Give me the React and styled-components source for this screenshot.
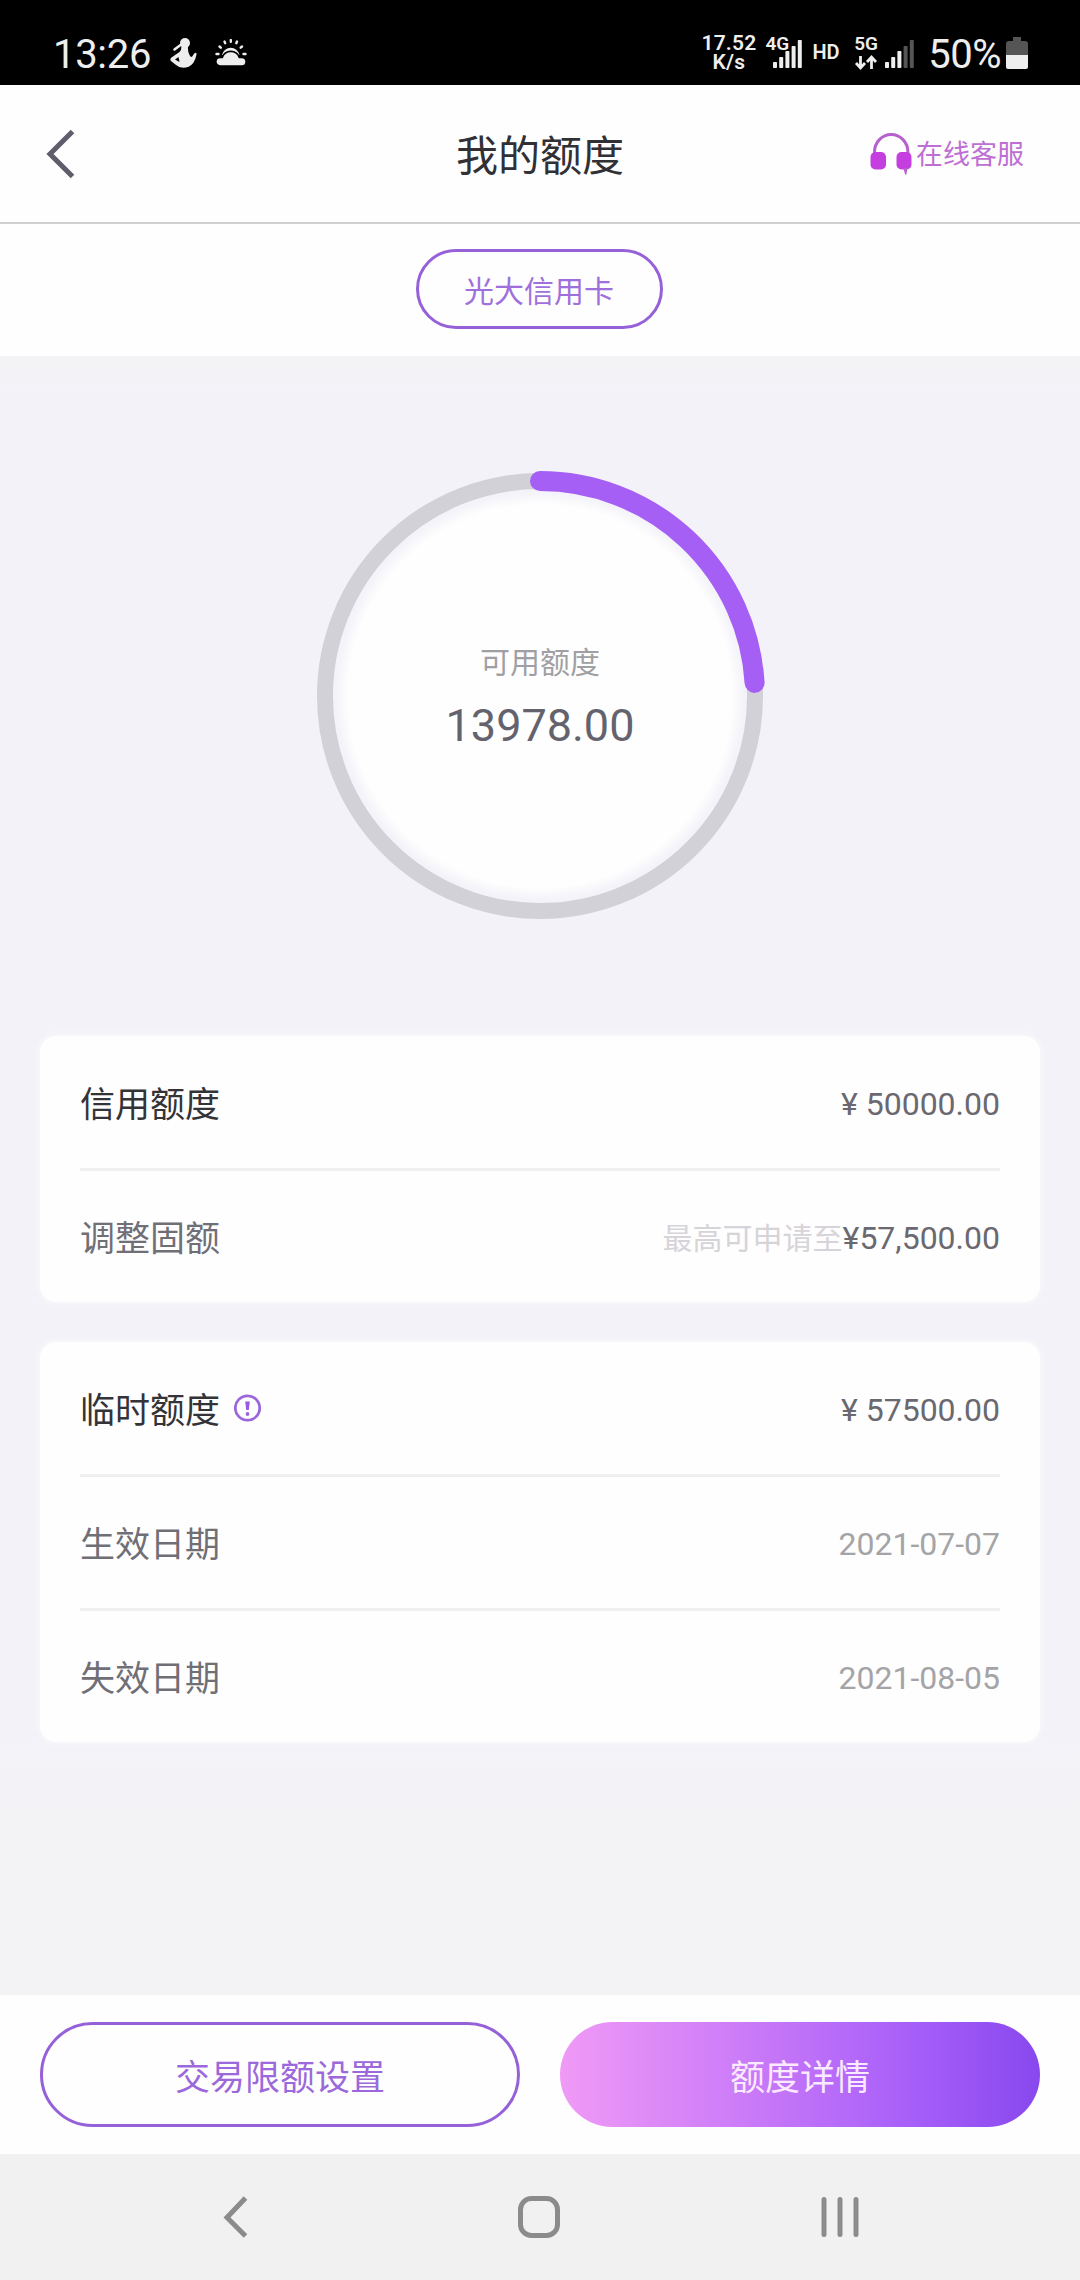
import React from "react";
import styled, { createGlobalStyle } from "styled-components";

const GlobalStyle = createGlobalStyle`
  * { box-sizing: border-box; }
  html, body { margin: 0; padding: 0; background: #fff; }
  body { font-family: Roboto, "Noto Sans CJK SC", sans-serif; }
  button { font-family: inherit; padding: 0; background: none; border: 0; }
  svg { display: block; flex: none; }
`;

const Screen = styled.div`
  width: 1080px;
  height: 2280px;
  display: flex;
  flex-direction: column;
  overflow: hidden;
  background: #fff;
`;

const StatusBar = styled.div`
  flex: none;
  height: 85px;
  padding: 22px 52px 0 53px;
  display: flex;
  justify-content: space-between;
  align-items: flex-start;
  background: #000;
  color: #eee;
`;

const StatusGroup = styled.div`
  display: flex;
  align-items: center;
  height: 62px;
`;

const StatusText = styled.span`
  margin-top: 3px;
  font-size: 40px;
  line-height: 62px;
  letter-spacing: ${(p) => p.$tracking || 0}px;
`;

const NetSpeed = styled.div`
  width: 57px;
  display: flex;
  flex-direction: column;
  align-items: center;
  font-size: 21px;
  line-height: 19px;
  font-weight: 600;
  letter-spacing: 0.2px;
`;

const Signal = styled.div`
  position: relative;
  width: ${(p) => p.$width}px;
  height: 36px;
  margin-left: ${(p) => p.$gap}px;
`;

const SignalLabel = styled.span`
  position: absolute;
  left: 0;
  top: -1px;
  font-size: 19px;
  line-height: 19px;
  font-weight: 600;
`;

const SignalArt = styled.svg`
  position: absolute;
  left: 0;
  top: 0;
`;

const HdMark = styled.span`
  margin: 0 0 3px 9px;
  font-size: 20px;
  font-weight: 600;
  line-height: 20px;
  letter-spacing: -0.2px;
`;

const Header = styled.header`
  flex: none;
  height: 139px;
  padding: 0 56px 0 44px;
  display: flex;
  align-items: center;
  justify-content: space-between;
  border-bottom: 2px solid #cfcfcf;
  background: #fefefe;
`;

const HeaderSide = styled.div`
  width: 240px;
  margin-right: ${(p) => (p.$end ? 0 : 12)}px;
  display: flex;
  justify-content: ${(p) => (p.$end ? "flex-end" : "flex-start")};
`;

const Title = styled.h1`
  margin: 6px 0 0;
  font-size: 42px;
  line-height: 50px;
  font-weight: 400;
  color: #303035;
`;

const Service = styled.button`
  display: flex;
  align-items: center;
  gap: 4px;
  padding-top: 2px;
  font-size: 27px;
  line-height: 44px;
  color: #bd6fd3;
`;

const TabStrip = styled.div`
  flex: none;
  height: 132px;
  padding: 25px 2px 0 0;
  display: flex;
  justify-content: center;
  align-items: flex-start;
  background: #fefefe;
`;

const CardTab = styled.button`
  width: 247px;
  height: 80px;
  padding-top: 5px;
  border: 3px solid #9560d8;
  border-radius: 40px;
  font-size: 30px;
  line-height: 40px;
  color: #9f70dc;
`;

const Main = styled.main`
  flex: 1;
  padding: 114px 40px 0;
  display: flex;
  flex-direction: column;
  gap: 40px;
  background: linear-gradient(#f3f3f5 0, #f3f2f8 40px, #f3f2f8 1380px, #f3f3f5 1480px);
`;

const Gauge = styled.div`
  width: 452px;
  height: 452px;
  margin: 0 auto 74px;
  display: grid;
  place-items: center;

  > * { grid-area: 1 / 1; }
`;

const GaugeText = styled.div`
  display: flex;
  flex-direction: column;
  align-items: center;
  margin-top: 3px;
`;

const GaugeLabel = styled.span`
  font-size: 30px;
  line-height: 40px;
  color: #a0a0a4;
`;

const GaugeValue = styled.strong`
  margin-top: 17px;
  font-size: 45px;
  line-height: 52px;
  font-weight: 400;
  color: #64626c;
`;

const Card = styled.section`
  padding: 0 40px;
  border-radius: 16px;
  background: #fefefe;
  box-shadow: 0 0 8px rgba(255, 255, 255, 0.8);
`;

const Row = styled.div`
  height: 132px;
  padding-top: 3px;
  display: flex;
  align-items: center;
  justify-content: space-between;
  line-height: 44px;

  & + & {
    height: 134px;
    border-top: 3px solid #efeff0;
  }
`;

const RowLabel = styled.span`
  display: flex;
  align-items: center;
  gap: 14px;
  padding-top: 4px;
  font-size: 35px;
  color: ${(p) => (p.$strong ? "#333338" : "#706f76")};

  svg { margin-bottom: 8px; }
`;

const RowValue = styled.span`
  font-size: 32px;
  color: ${(p) => (p.$muted ? "#a4a4a7" : "#6a6870")};
`;

const Hint = styled.span`
  font-size: 30px;
  color: #d6d4d9;
`;

const Actions = styled.footer`
  flex: none;
  height: 159px;
  padding: 27px 40px;
  display: flex;
  gap: 40px;
  background: #fefefe;
`;

const ActionButton = styled.button`
  width: 480px;
  height: 105px;
  padding-top: 9px;
  border-radius: 53px;
  border: ${(p) => (p.$primary ? "0" : "3px solid #9560d8")};
  background: ${(p) =>
    p.$primary ? "linear-gradient(90deg, #f09af6 0%, #c778f8 42%, #a55df8 75%, #8848ee 100%)" : "transparent"};
  font-size: 35px;
  line-height: 46px;
  color: ${(p) => (p.$primary ? "#fbe9ff" : "#9b69db")};
`;

const NavBar = styled.nav`
  flex: none;
  height: 126px;
  padding: 0 221px 1px 215px;
  display: flex;
  align-items: center;
  justify-content: space-between;
  background: #f1f1f1;
`;

const BabyIcon = () => (
  <svg width="28" height="32" viewBox="0 0 28 32" fill="#eee">
    <circle cx="16" cy="6" r="5" />
    <path d="M12.500 9h6.500q-.5 5 1.500 9t4-.5l1.500-1.800q2.200 0 1.200 3q-1.700 8-7.500 11q-7.500 3-13-2L2 24q-1.500-1.700.5-3.500l8-5.500q2-2 2-6z" />
    <path d="M5.500 12.500l6-4.500" fill="none" stroke="#eee" strokeWidth="2.600" strokeLinecap="round" />
    <path d="M6 22.500l3.500-2.500l1 5z" fill="#000" />
  </svg>
);

const WeatherIcon = () => (
  <svg width="32" height="28" viewBox="0 0 32 28">
    <path d="M1.500 15h2M4.500 7.500l1.300 1.200M9.500 2.500l.7 1.700M15.800 1v1.800M22 2.500l-.7 1.700M27 7.500l-1.300 1.200M28.500 15h2" stroke="#eee" strokeWidth="2.400" strokeLinecap="round" fill="none" />
    <path d="M7 16a9 9.500 0 0 1 17.500 0z" fill="#eee" />
    <path d="M5 27a4.300 4.300 0 0 1 .3-8.600h2a9 9 0 0 1 17 0h2.500a4.300 4.300 0 0 1 0 8.600z" fill="#eee" stroke="#000" strokeWidth="1.600" />
  </svg>
);

const Bars = ({ lit, x }) =>
  [6, 11, 17, 22, 28].map((h, i) => (
    <rect key={h} x={x + i * 6.2} y={33 - h} width="4" height={h} rx="0.800" fill={i < lit ? "#eee" : "#555"} />
  ));

const BatteryIcon = () => (
  <svg width="22" height="33" viewBox="0 0 22 33">
    <path d="M7 0h8v4h4q3 0 3 3v11H0V7q0-3 3-3h4z" fill="#555" />
    <path d="M0 18h22v12q0 2-2 2H2q-2 0-2-2z" fill="#eee" />
  </svg>
);

const BackIcon = () => (
  <svg width="34" height="52" viewBox="0 0 34 52" fill="none" stroke="#5f5c6b" strokeWidth="5">
    <path d="M28.500 3.500L6 26L28.500 48.500" />
  </svg>
);

const HeadsetIcon = () => (
  <svg width="42" height="43" viewBox="0 0 42 43">
    <path d="M4.500 21v-2a16.700 17.500 0 0 1 33.400 0v2" fill="none" stroke="#b85fd0" strokeWidth="3" />
    <rect x="0.500" y="19" width="15.500" height="17.500" rx="5" fill="#c43ee0" />
    <rect x="26.500" y="19" width="15" height="17.500" rx="5" fill="#c43ee0" />
    <path d="M33.500 35h4l-1 6q-.8 1.500-1.600 0z" fill="#b85fd0" />
  </svg>
);

const InfoIcon = () => (
  <svg width="28" height="28" viewBox="0 0 28 28">
    <circle cx="13.500" cy="14" r="12.200" fill="none" stroke="#9a66dc" strokeWidth="2.800" />
    <path d="M11.200 7.500h4.600l-1 8.500h-2.600z" fill="#9a5be4" />
    <circle cx="13.500" cy="20" r="1.900" fill="#9a66dc" />
  </svg>
);

const RING = 215;
const USED_DEGREES = 86.500;

const GaugeRing = () => {
  const a = (USED_DEGREES * Math.PI) / 180;
  const x = 226 + RING * Math.sin(a);
  const y = 226 - RING * Math.cos(a);
  return (
    <svg width="452" height="452" viewBox="0 0 452 452" fill="none">
      <defs>
        <radialGradient id="dial">
          <stop offset="0.925" stopColor="#fefefe" />
          <stop offset="0.985" stopColor="#f4f3f9" />
        </radialGradient>
      </defs>
      <circle cx="226" cy="226" r="207" fill="url(#dial)" />
      <circle cx="226" cy="226" r={RING} stroke="#d2d1d8" strokeWidth="16" />
      <path d={`M226 ${226 - RING}A${RING} ${RING} 0 0 1 ${x} ${y}`} stroke="#a55ff5" strokeWidth="20" strokeLinecap="round" />
    </svg>
  );
};

export default function App() {
  return (
    <Screen>
      <GlobalStyle />
      <StatusBar>
        <StatusGroup>
          <StatusText $tracking={-0.3}>13:26</StatusText>
          <svg width="18" height="1" />
          <BabyIcon />
          <svg width="18" height="1" />
          <WeatherIcon />
        </StatusGroup>
        <StatusGroup>
          <NetSpeed>
            <span>17.52</span>
            <span>K/s</span>
          </NetSpeed>
          <Signal $width={38} $gap={8}>
            <SignalLabel>4G</SignalLabel>
            <SignalArt width="38" height="36">
              <Bars lit={5} x={8} />
            </SignalArt>
          </Signal>
          <HdMark>HD</HdMark>
          <Signal $width={61} $gap={15}>
            <SignalLabel>5G</SignalLabel>
            <SignalArt width="61" height="36">
              <path d="M6.500 21v11M2 28l4.500 5l4.500-5M17.500 34v-11M13 27l4.500-5l4.500 5" fill="none" stroke="#eee" strokeWidth="2.800" />
              <Bars lit={3} x={31} />
            </SignalArt>
          </Signal>
          <svg width="13" height="1" />
          <StatusText $tracking={-0.5}>50%</StatusText>
          <svg width="5" height="1" />
          <BatteryIcon />
        </StatusGroup>
      </StatusBar>

      <Header>
        <HeaderSide>
          <BackIcon />
        </HeaderSide>
        <Title>我的额度</Title>
        <HeaderSide $end>
          <Service>
            <HeadsetIcon />
            在线客服
          </Service>
        </HeaderSide>
      </Header>

      <TabStrip>
        <CardTab>光大信用卡</CardTab>
      </TabStrip>

      <Main>
        <Gauge>
          <GaugeRing />
          <GaugeText>
            <GaugeLabel>可用额度</GaugeLabel>
            <GaugeValue>13978.00</GaugeValue>
          </GaugeText>
        </Gauge>

        <Card>
          <Row>
            <RowLabel $strong>信用额度</RowLabel>
            <RowValue>¥ 50000.00</RowValue>
          </Row>
          <Row>
            <RowLabel>调整固额</RowLabel>
            <RowValue>
              <Hint>最高可申请至</Hint>¥57,500.00
            </RowValue>
          </Row>
        </Card>

        <Card>
          <Row>
            <RowLabel $strong>
              临时额度
              <InfoIcon />
            </RowLabel>
            <RowValue>¥ 57500.00</RowValue>
          </Row>
          <Row>
            <RowLabel>生效日期</RowLabel>
            <RowValue $muted>2021-07-07</RowValue>
          </Row>
          <Row>
            <RowLabel>失效日期</RowLabel>
            <RowValue $muted>2021-08-05</RowValue>
          </Row>
        </Card>
      </Main>

      <Actions>
        <ActionButton>交易限额设置</ActionButton>
        <ActionButton $primary>额度详情</ActionButton>
      </Actions>

      <NavBar>
        <svg width="42" height="48" viewBox="0 0 42 48" fill="none" stroke="#8b8b8b" strokeWidth="5">
          <path d="M30.500 5L12 24.500L30.500 43" />
        </svg>
        <svg width="42" height="42" viewBox="0 0 42 42" fill="none" stroke="#8b8b8b" strokeWidth="5">
          <rect x="2.500" y="2.500" width="37" height="37" rx="11" />
        </svg>
        <svg width="38" height="40" viewBox="0 0 38 40" stroke="#8b8b8b" strokeWidth="5" strokeLinecap="round">
          <path d="M3 2.500v35M19 2.500v35M35 2.500v35" />
        </svg>
      </NavBar>
    </Screen>
  );
}
